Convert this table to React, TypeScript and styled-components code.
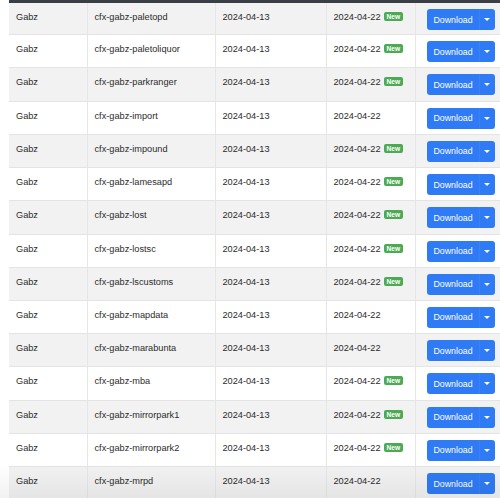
import React from "react";
import styled, { createGlobalStyle } from "styled-components";

const Global = createGlobalStyle`
  html, body { margin: 0; padding: 0; background: #ffffff; }
  body { font-family: "Liberation Sans", Arial, sans-serif; overflow: hidden; }
`;

const Page = styled.div`
  padding-left: 9px;
  width: 600px;
  height: 498px;
  overflow: hidden;
`;

const Table = styled.table`
  border-collapse: collapse;
  table-layout: fixed;
  width: 591px;
  border-top: 3px solid #3a3f45;
  font-size: 9.2px;
  color: #2b2b2b;
`;

const Row = styled.tr<{ $alt: boolean }>`
  height: 33.22px;
  background: ${(p) => (p.$alt ? "#f2f2f2" : "#ffffff")};
  border-bottom: 1px solid #e4e4e4;
`;

const Cell = styled.td<{ $w: number }>`
  width: ${(p) => p.$w}px;
  box-sizing: border-box;
  padding: 9px 7px 0 7px;
  vertical-align: top;
  border-left: 1px solid #e6e6e6;
  white-space: nowrap;
  line-height: 11px;
  &:first-child { border-left: none; }
`;

const ActionCell = styled.td`
  box-sizing: border-box;
  padding: 6px 0 0 11px;
  vertical-align: top;
  border-left: 1px solid #e6e6e6;
`;

const Badge = styled.span`
  display: inline-block;
  margin-left: 3px;
  padding: 0 3px;
  height: 9px;
  line-height: 9px;
  font-size: 6.6px;
  font-weight: bold;
  color: #ffffff;
  background: #4caa55;
  border-radius: 2px;
  vertical-align: 1px;
`;

const SplitButton = styled.div`
  display: inline-flex;
  height: 21px;
  border-radius: 3px;
  overflow: hidden;
  background: #2f7bf5;
  color: #ffffff;
`;

const MainPart = styled.span`
  display: flex;
  align-items: center;
  padding: 0 6px 0 7px;
  font-size: 8.8px;
`;

const CaretPart = styled.span`
  display: flex;
  align-items: center;
  justify-content: center;
  width: 15px;
  border-left: 1px solid rgba(255, 255, 255, 0.05);
`;

const Caret = styled.span`
  width: 0;
  height: 0;
  border-left: 3px solid transparent;
  border-right: 3px solid transparent;
  border-top: 3px solid #ffffff;
`;

const Shade = styled.div`
  position: fixed;
  left: 0;
  right: 0;
  bottom: 0;
  height: 34px;
  pointer-events: none;
  background: linear-gradient(to bottom, rgba(0, 0, 0, 0), rgba(0, 0, 0, 0.05));
`;

const rows: [string, boolean][] = [
  ["paletopd", true],
  ["paletoliquor", true],
  ["parkranger", true],
  ["import", false],
  ["impound", true],
  ["lamesapd", true],
  ["lost", true],
  ["lostsc", true],
  ["lscustoms", true],
  ["mapdata", false],
  ["marabunta", false],
  ["mba", true],
  ["mirrorpark1", true],
  ["mirrorpark2", true],
  ["mrpd", false],
];

export default function App() {
  return (
    <>
      <Global />
      <Page>
        <Table>
          <tbody>
            {rows.map(([name, isNew], i) => (
              <Row key={name} $alt={i % 2 === 0}>
                <Cell $w={78}>Gabz</Cell>
                <Cell $w={128}>cfx-gabz-{name}</Cell>
                <Cell $w={111}>2024-04-13</Cell>
                <Cell $w={89}>
                  2024-04-22{isNew && <Badge>New</Badge>}
                </Cell>
                <ActionCell>
                  <SplitButton>
                    <MainPart>Download</MainPart>
                    <CaretPart>
                      <Caret />
                    </CaretPart>
                  </SplitButton>
                </ActionCell>
              </Row>
            ))}
          </tbody>
        </Table>
      </Page>
      <Shade />
    </>
  );
}
